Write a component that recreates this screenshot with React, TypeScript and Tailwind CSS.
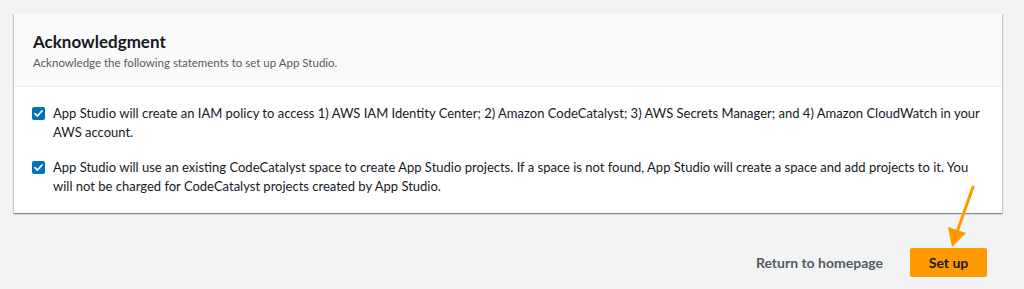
export default function App() {
    const items = [
        "App Studio will create an IAM policy to access 1) AWS IAM Identity Center; 2) Amazon CodeCatalyst; 3) AWS Secrets Manager; and 4) Amazon CloudWatch in your AWS account.",
        "App Studio will use an existing CodeCatalyst space to create App Studio projects. If a space is not found, App Studio will create a space and add projects to it. You will not be charged for CodeCatalyst projects created by App Studio.",
    ];

    return (
        <div
            className="relative h-[289px] w-full bg-[#f2f3f3] pt-[13px] pl-[14px] pr-[22px] text-[#16191f]"
            style={{ fontFamily: 'Lato, "Open Sans", sans-serif' }}
        >
            {/* card */}
            <div className="bg-white shadow-[0_1px_1px_rgba(0,28,36,0.3),1px_1px_1px_rgba(0,28,36,0.15),-1px_1px_1px_rgba(0,28,36,0.15)]">
                <div className="h-[74px] bg-[#fafafa] border-b border-[#eaeded] px-[19px] pt-[18px]">
                    <h2 className="text-[17px] leading-[22px] font-bold">Acknowledgment</h2>
                    <p className="mt-[2px] text-[11.5px] leading-[16px] text-[#545b64]">
                        Acknowledge the following statements to set up App Studio.
                    </p>
                </div>
                <div className="flex flex-col gap-4 pl-[18px] pr-[14px] pt-[17px] pb-[17px]">
                    {items.map((t, i) => (
                        <label key={i} className="flex items-start gap-[8px] text-[13px] leading-[19px]">
                            <span className="mt-[3px] flex h-[13px] w-[13px] shrink-0 items-center justify-center rounded-[2px] bg-[#0073bb]">
                                <svg viewBox="0 0 14 14" className="h-[11px] w-[11px]">
                                    <path d="M2.5 7.2 5.6 10.2 11.5 3.8" fill="none" stroke="white" strokeWidth="2.2" strokeLinecap="round" strokeLinejoin="round" />
                                </svg>
                            </span>
                            <span>{t}</span>
                        </label>
                    ))}
                </div>
            </div>

            {/* footer actions */}
            <div className="mt-[35px] flex items-center justify-end gap-[27px] pr-[15px]">
                <button className="text-[14px] font-bold text-[#545b64]">Return to homepage</button>
                <button className="h-[29px] w-[77px] rounded-[2px] bg-[#ff9900] text-[14px] font-bold text-[#16191f]">
                    Set up
                </button>
            </div>

            {/* annotation arrow */}
            <svg className="absolute left-[940px] top-[180px]" width="40" height="70" viewBox="0 0 40 70">
                <line x1="33" y1="7" x2="17" y2="52" stroke="#ff9900" strokeWidth="3" strokeLinecap="round" />
                <polygon points="8,47 26,53 12,67" fill="#ff9900" />
            </svg>
        </div>
    );
}
